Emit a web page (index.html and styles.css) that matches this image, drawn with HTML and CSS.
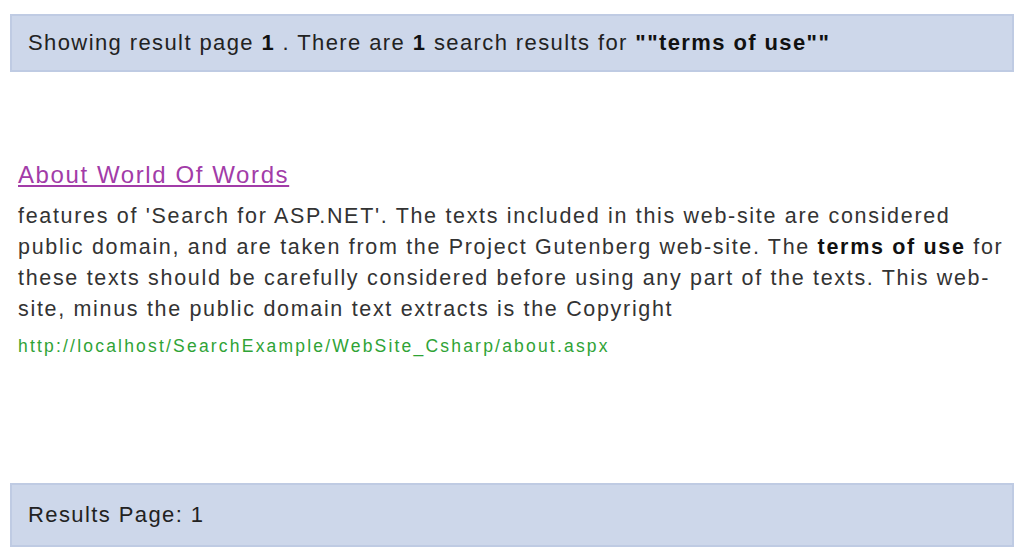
FILE: index.html
```html
<!DOCTYPE html>
<html lang="en">
<head>
    <meta charset="UTF-8">
    <title>Search Results</title>
    <link rel="stylesheet" href="styles.css">
</head>
<body>
    <div class="summary">
        <span>Showing result page <b>1</b> . There are <b>1</b> search results for <b>""terms of use""</b></span>
    </div>

    <div class="results">
        <div class="result">
            <a class="result-title" href="#">About World Of Words</a>
            <p class="result-text">features of 'Search for ASP.NET'. The texts included in this web-site are considered public domain, and are taken from the Project Gutenberg web-site. The <b>terms of use</b> for these texts should be carefully considered before using any part of the texts. This web-site, minus the public domain text extracts is the Copyright</p>
            <div class="result-url">http://localhost/SearchExample/WebSite_Csharp/about.aspx</div>
        </div>
    </div>

    <div class="pager">
        <span>Results Page: 1</span>
    </div>
</body>
</html>
```

FILE: styles.css
```css
/* General */
body {
    font-family: 'Liberation Sans', Arial, sans-serif;
    margin: 0;
    padding: 0;
    background-color: #ffffff;
    color: #333333;
}

/* Blue bars */
.summary, .pager {
    background-color: #cdd7ea;
    border: 2px solid #bfcbe3;
    margin: 0 10px;
    padding: 0 16px;
    font-size: 22px;
    letter-spacing: 1.4px;
    color: #222222;
    display: flex;
    align-items: center;
    box-sizing: border-box;
}

.summary {
    margin-top: 14px;
    height: 58px;
}

.pager {
    height: 64px;
}

.summary b {
    color: #111111;
}

.results {
    height: 411px;
    padding: 88px 12px 0 18px;
    box-sizing: border-box;
}

.result-title {
    font-size: 24px;
    letter-spacing: 1.6px;
    color: #a23ca8;
    line-height: 30px;
}

.result-text {
    font-size: 21.5px;
    letter-spacing: 1.68px;
    line-height: 31px;
    margin: 11px 0 0;
}

.result-text b {
    color: #111111;
}

.result-url {
    font-size: 17.5px;
    letter-spacing: 2.2px;
    color: #2fa336;
    margin-top: 11px;
}
```
